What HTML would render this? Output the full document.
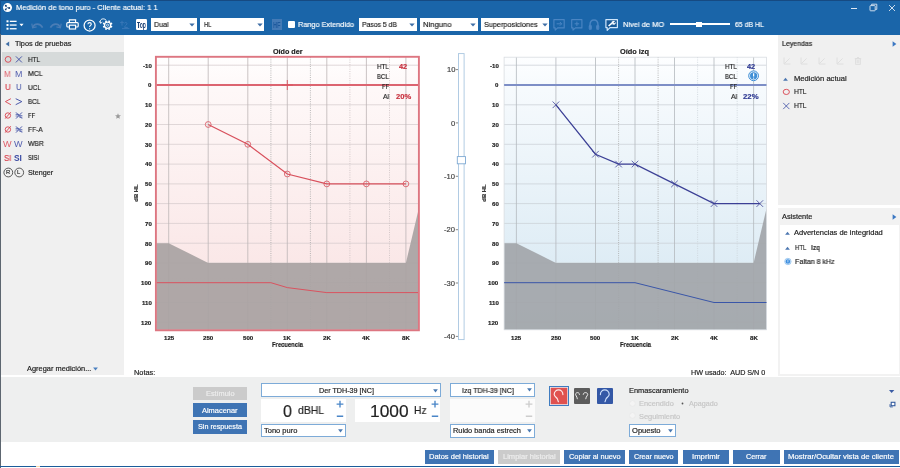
<!DOCTYPE html>
<html>
<head>
<meta charset="utf-8">
<title>Medición de tono puro</title>
<style>
html,body{margin:0;padding:0;}
body{width:900px;height:468px;overflow:hidden;background:#fff;font-family:"Liberation Sans",sans-serif;font-size:7.5px;color:#222;position:relative;}
.abs{position:absolute;}
.t{position:absolute;white-space:nowrap;line-height:10px;height:10px;will-change:transform;-webkit-text-stroke:0.18px;}
svg{display:block;overflow:visible;}
</style>
</head>
<body>
<div class="abs" style="left:0.00px;top:0.00px;width:900.00px;height:34.60px;background:#1a65a9;"></div>
<div class="abs" style="left:0.00px;top:0.00px;width:900.00px;height:1.00px;background:#164a82;"></div>
<div class="abs" style="left:0.00px;top:0.00px;width:1.00px;height:34.60px;background:#17528e;"></div>
<div class="abs" style="left:1.00px;top:34.60px;width:122.60px;height:340.40px;background:#f0f0f0;"></div>
<div class="abs" style="left:1.50px;top:52.20px;width:122.10px;height:14.00px;background:#d6dada;"></div>
<div class="abs" style="left:778.30px;top:34.60px;width:121.70px;height:170.60px;background:#f0f0f0;"></div>
<div class="abs" style="left:778.30px;top:207.70px;width:121.70px;height:168.30px;background:#f2f2f2;"></div>
<div class="abs" style="left:780.00px;top:224.80px;width:119.00px;height:148.80px;background:#ffffff;"></div>
<div class="abs" style="left:1.00px;top:377.00px;width:899.00px;height:65.00px;background:#eeefef;"></div>
<svg class="abs" style="left:0;top:0" width="16" height="16" viewBox="0 0 16 16"><circle cx="7.55" cy="7.6" r="4.5" fill="#fff"/><path d="M5.8 5.7L7.4 7.7L9.2 8M7.4 7.7L5.7 9.4" stroke="#1b4f8a" stroke-width="0.6" fill="none"/><circle cx="5.8" cy="5.7" r="1" fill="#173f73"/><circle cx="9.2" cy="8" r="1.05" fill="#173f73"/><circle cx="5.7" cy="9.4" r="0.9" fill="#173f73"/></svg>
<div class="t" style="left:16.30px;top:2.60px;font-size:7.80px;color:#fff;transform:scaleX(0.967);transform-origin:0 50%;">Medición de tono puro - Cliente actual: 1 1</div>
<div class="abs" style="left:850.50px;top:7.60px;width:6.50px;height:1.00px;background:#dfe8f3;"></div>
<svg class="abs" style="left:868px;top:2px" width="11" height="11" viewBox="0 0 11 11" fill="none" stroke="#dfe8f3" stroke-width="0.9"><rect x="2" y="3.6" width="5.2" height="5.2" rx="0.6"/><path d="M3.6 3.4V2.2H8.8V7.4H7.4"/></svg>
<svg class="abs" style="left:888px;top:4px" width="8" height="8" viewBox="0 0 8 8" stroke="#dfe8f3" stroke-width="0.9"><path d="M1 1L7 7M7 1L1 7"/></svg>
<svg class="abs" style="left:5.5px;top:20px" width="18" height="11" viewBox="0 0 18 11"><g fill="#fff"><rect x="0.5" y="0.3" width="2" height="2"/><rect x="0.5" y="4" width="2" height="2"/><rect x="0.5" y="7.7" width="2" height="2"/><rect x="3.8" y="0.7" width="6.8" height="1.3"/><rect x="3.8" y="4.4" width="6.8" height="1.3"/><rect x="3.8" y="8.1" width="6.8" height="1.3"/><path d="M13.4 3.7H17.6L15.5 6.2Z"/></g></svg>
<svg class="abs" style="left:30.5px;top:21px" width="13" height="9" viewBox="0 0 13 9" fill="none" stroke="#4a7db6" stroke-width="1.7"><path d="M2 6C3.5 2.2 9 1.8 11.6 6.6"/><path d="M0.8 2.6L1.6 6.8L5.6 5.8" stroke-width="1.2"/></svg>
<svg class="abs" style="left:48.5px;top:21px" width="13" height="9" viewBox="0 0 13 9" fill="none" stroke="#4a7db6" stroke-width="1.7"><path d="M11 6C9.5 2.2 4 1.8 1.4 6.6"/><path d="M12.2 2.6L11.4 6.8L7.4 5.8" stroke-width="1.2"/></svg>
<svg class="abs" style="left:66px;top:19.2px" width="13" height="11" viewBox="0 0 13 11" fill="none" stroke="#fff" stroke-width="1.15"><path d="M3.4 3.6V0.9H9.6V3.6"/><rect x="0.8" y="3.6" width="11.4" height="4.4" rx="1"/><rect x="3.4" y="6.2" width="6.2" height="3.8" fill="#1a65a9"/></svg>
<svg class="abs" style="left:83px;top:18.5px" width="13" height="13" viewBox="0 0 13 13" fill="none" stroke="#fff" stroke-width="1"><circle cx="6.6" cy="6.5" r="5.5" stroke-width="1.25"/><path d="M4.9 5.2C4.9 3.1 8.3 3.1 8.3 5.2C8.3 6.5 6.6 6.4 6.6 8" stroke-width="1.1"/><circle cx="6.6" cy="9.8" r="0.65" fill="#fff" stroke="none"/></svg>
<svg class="abs" style="left:0;top:0" width="900" height="40" viewBox="0 0 900 40" fill="none" stroke="#fff"><circle cx="107.6" cy="25.2" r="3.1" stroke-width="1.3"/><path d="M110.74 26.50L112.13 27.08M108.90 28.34L109.48 29.73M106.30 28.34L105.72 29.73M104.46 26.50L103.07 27.08M104.46 23.90L103.07 23.32M106.30 22.06L105.72 20.67M108.90 22.06L109.48 20.67M110.74 23.90L112.13 23.32" stroke-width="1.7"/><circle cx="107.6" cy="25.2" r="1.1" stroke-width="0.7"/><path d="M100.4 22.8C99.4 19.6 102.8 17.6 105.8 19.8" stroke-width="1"/><path d="M99.5 21L100.5 23.4L102.4 22" stroke-width="0.8"/></svg>
<svg class="abs" style="left:119px;top:19.5px" width="11" height="11" viewBox="0 0 11 11" fill="none" stroke="#3a78b8" stroke-width="1"><path d="M3 0.8V5.6M1.2 2.6H4.8M5.4 3.2C6.4 1.8 8.6 2.6 7.8 4.2C7.2 5.4 5.6 6 5.6 7.4H8.8M3 8.6H10.4"/></svg>
<div class="abs" style="left:136.00px;top:19.30px;width:11.00px;height:10.90px;background:#fff;border-radius:1.2px;"></div>
<div class="t" style="left:137.20px;top:20.42px;font-size:8.30px;color:#173d72;font-weight:bold;transform:scaleX(0.603);transform-origin:0 50%;-webkit-text-stroke:0;">Top</div>
<div class="abs" style="left:150.70px;top:18.00px;width:46.10px;height:13.20px;background:#fff;"></div>
<div class="t" style="left:153.70px;top:19.60px;font-size:7.80px;color:#1c1c1c;transform:scaleX(0.910);transform-origin:0 50%;">Dual</div>
<svg class="abs" style="left:189.2px;top:23px" width="6" height="4" viewBox="0 0 6 4"><path d="M0.3 0.4H5.7L3 3.6Z" fill="#3f6ea6"/></svg>
<div class="abs" style="left:200.30px;top:18.00px;width:64.20px;height:13.20px;background:#fff;"></div>
<div class="t" style="left:204.00px;top:19.60px;font-size:7.80px;color:#1c1c1c;transform:scaleX(0.732);transform-origin:0 50%;">HL</div>
<svg class="abs" style="left:256.9px;top:23px" width="6" height="4" viewBox="0 0 6 4"><path d="M0.3 0.4H5.7L3 3.6Z" fill="#3f6ea6"/></svg>
<div class="abs" style="left:272.00px;top:19.20px;width:9.60px;height:10.60px;background:#447ab6;"></div>
<div class="t" style="left:273.00px;top:20.32px;font-size:8.60px;color:#1d599c;font-weight:bold;transform:scaleX(0.654);transform-origin:0 50%;-webkit-text-stroke:0;">HF</div>
<div class="abs" style="left:288.00px;top:21.30px;width:7.00px;height:7.00px;background:#fff;border-radius:1px;"></div>
<div class="t" style="left:298.00px;top:19.60px;font-size:7.80px;color:#fff;transform:scaleX(0.936);transform-origin:0 50%;">Rango Extendido</div>
<div class="abs" style="left:359.30px;top:18.00px;width:57.50px;height:13.20px;background:#fff;"></div>
<div class="t" style="left:362.00px;top:19.60px;font-size:7.80px;color:#1c1c1c;transform:scaleX(0.877);transform-origin:0 50%;">Pasos 5 dB</div>
<svg class="abs" style="left:409.2px;top:23px" width="6" height="4" viewBox="0 0 6 4"><path d="M0.3 0.4H5.7L3 3.6Z" fill="#3f6ea6"/></svg>
<div class="abs" style="left:420.30px;top:18.00px;width:57.70px;height:13.20px;background:#fff;"></div>
<div class="t" style="left:423.00px;top:19.60px;font-size:7.80px;color:#1c1c1c;transform:scaleX(0.981);transform-origin:0 50%;">Ninguno</div>
<svg class="abs" style="left:470.4px;top:23px" width="6" height="4" viewBox="0 0 6 4"><path d="M0.3 0.4H5.7L3 3.6Z" fill="#3f6ea6"/></svg>
<div class="abs" style="left:481.30px;top:18.00px;width:68.20px;height:13.20px;background:#fff;"></div>
<div class="t" style="left:484.30px;top:19.60px;font-size:7.80px;color:#1c1c1c;transform:scaleX(0.931);transform-origin:0 50%;">Superposiciones</div>
<svg class="abs" style="left:541.9px;top:23px" width="6" height="4" viewBox="0 0 6 4"><path d="M0.3 0.4H5.7L3 3.6Z" fill="#3f6ea6"/></svg>
<svg class="abs" style="left:0;top:0" width="900" height="40" viewBox="0 0 900 40" fill="none" stroke="#4a85c3" stroke-width="1.15" stroke-linejoin="round"><path d="M553.9 19.6H564.2V27.9H557.6L555.2 30.1V27.9H553.9Z"/><path d="M556.6 23.8H561.6M559.8 21.9L561.7 23.8L559.8 25.7" stroke-width="1"/><path d="M571.7 19.6H581.9V27.9H575.4L573 30.1V27.9H571.7Z"/><path d="M576.9 21.6V26M574.6 23.8H579.2" stroke-width="1"/><path d="M590 27V25C590 18.4 598 18.4 598 25V27" stroke-width="1.4"/><rect x="589.2" y="25.2" width="2.2" height="4.4" rx="0.9" stroke-width="0.9" fill="#4a85c3"/><rect x="596.6" y="25.2" width="2.2" height="4.4" rx="0.9" stroke-width="0.9" fill="#4a85c3"/><path d="M605.9 19.6H617.4V27.6H610L607.2 30.4V27.6H605.9Z" stroke="#cfe6fb" stroke-width="1.2" fill="#185997"/><path d="M608.6 26L612 23.2" stroke="#fff" stroke-width="1.6"/><path d="M611.6 22C612.4 21 613.8 20.8 614.8 21.4L613.4 22.6L614.2 23.5L615.6 22.4C615.9 23.8 614.4 25.1 612.7 24.4Z" fill="#fff" stroke="#fff" stroke-width="0.3"/></svg>
<div class="t" style="left:623.00px;top:19.60px;font-size:7.80px;color:#fff;transform:scaleX(0.962);transform-origin:0 50%;">Nivel de MO</div>
<div class="abs" style="left:669.50px;top:23.40px;width:60.00px;height:2.10px;background:#fff;"></div>
<div class="abs" style="left:696.30px;top:22.40px;width:6.20px;height:4.60px;background:#fff;"></div>
<div class="t" style="left:735.00px;top:19.60px;font-size:7.80px;color:#fff;transform:scaleX(0.886);transform-origin:0 50%;">65 dB HL</div>
<svg class="abs" style="left:5px;top:40.5px" width="5" height="6" viewBox="0 0 5 6"><path d="M4.2 0.4V5.6L0.6 3Z" fill="#3f6ea6"/></svg>
<div class="t" style="left:15.00px;top:38.81px;font-size:7.20px;color:#222;transform:scaleX(1.020);transform-origin:0 50%;">Tipos de pruebas</div>
<svg class="abs" style="left:3.5px;top:55.2px" width="20" height="9" viewBox="0 0 20 9" fill="none" stroke-width="0.9"><circle cx="4.1" cy="4.4" r="2.9" stroke="#d8434f"/><path d="M11.9 1.4L17.9 7.4M17.9 1.4L11.9 7.4" stroke="#3b4ba3"/></svg>
<div class="t" style="left:27.80px;top:54.81px;font-size:7.20px;color:#222;transform:scaleX(0.882);transform-origin:0 50%;">HTL</div>
<div class="t" style="left:4.20px;top:69.22px;font-size:8.90px;color:#df5e69;transform:scaleX(0.904);transform-origin:0 50%;-webkit-text-stroke:0;">M</div>
<div class="t" style="left:14.70px;top:69.22px;font-size:8.90px;color:#5561b0;transform:scaleX(0.958);transform-origin:0 50%;-webkit-text-stroke:0;">M</div>
<div class="t" style="left:27.80px;top:68.81px;font-size:7.20px;color:#1c1c1c;transform:scaleX(0.960);transform-origin:0 50%;">MCL</div>
<div class="t" style="left:4.50px;top:82.18px;font-size:9.00px;color:#d8434f;transform:scaleX(0.892);transform-origin:0 50%;">U</div>
<div class="t" style="left:15.50px;top:82.18px;font-size:9.00px;color:#3b4ba3;transform:scaleX(0.862);transform-origin:0 50%;-webkit-text-stroke:0;">U</div>
<div class="t" style="left:27.80px;top:82.81px;font-size:7.20px;color:#1c1c1c;transform:scaleX(0.889);transform-origin:0 50%;">UCL</div>
<svg class="abs" style="left:3.5px;top:96.8px" width="20" height="9" viewBox="0 0 20 9" fill="none" stroke-width="0.9"><path d="M6.9 1.7L1.4 4.6L6.9 7.7" stroke="#d8434f"/><path d="M11.7 1.7L17.8 4.6L11.7 7.7" stroke="#3b4ba3"/></svg>
<div class="t" style="left:27.80px;top:96.81px;font-size:7.20px;color:#1c1c1c;transform:scaleX(0.871);transform-origin:0 50%;">BCL</div>
<svg class="abs" style="left:3.5px;top:111.1px" width="20" height="9" viewBox="0 0 20 9" fill="none" stroke-width="0.9"><circle cx="3.9" cy="4.5" r="2.7" stroke="#d8434f"/><path d="M1.2 7.6L6.8 1.2" stroke="#d8434f"/><path d="M12 1.4L18 7.6M18 1.4L12 7.6" stroke="#3b4ba3"/><path d="M11.6 3.4H15M11.6 5H14.4M15.6 4.6H18.4M15.2 6.2H18.4" stroke="#3b4ba3" stroke-width="0.7"/></svg>
<div class="t" style="left:27.90px;top:110.81px;font-size:7.20px;color:#1c1c1c;transform:scaleX(0.796);transform-origin:0 50%;">FF</div>
<svg class="abs" style="left:3.5px;top:125.0px" width="20" height="9" viewBox="0 0 20 9" fill="none" stroke-width="0.9"><circle cx="3.9" cy="4.5" r="2.7" stroke="#d8434f"/><path d="M1.2 7.6L6.8 1.2" stroke="#d8434f"/><path d="M12 1.4L18 7.6M18 1.4L12 7.6" stroke="#3b4ba3"/><path d="M11.6 3.4H15M11.6 5H14.4M15.6 4.6H18.4M15.2 6.2H18.4" stroke="#3b4ba3" stroke-width="0.7"/></svg>
<div class="t" style="left:27.90px;top:124.81px;font-size:7.20px;color:#1c1c1c;transform:scaleX(0.913);transform-origin:0 50%;">FF-A</div>
<svg class="abs" style="left:114.5px;top:112.6px" width="6" height="6" viewBox="0 0 10 10"><path d="M5 0.3L6.4 3.6L9.9 3.9L7.2 6.2L8.1 9.7L5 7.8L1.9 9.7L2.8 6.2L0.1 3.9L3.6 3.6Z" fill="#9a9a9a"/></svg>
<div class="t" style="left:3.20px;top:139.25px;font-size:8.80px;color:#df5e69;transform:scaleX(1.035);transform-origin:0 50%;-webkit-text-stroke:0;">W</div>
<div class="t" style="left:14.00px;top:139.25px;font-size:8.80px;color:#5561b0;transform:scaleX(1.035);transform-origin:0 50%;-webkit-text-stroke:0;">W</div>
<div class="t" style="left:27.90px;top:138.81px;font-size:7.20px;color:#1c1c1c;transform:scaleX(0.947);transform-origin:0 50%;">WBR</div>
<div class="t" style="left:3.60px;top:153.39px;font-size:8.40px;color:#d8434f;transform:scaleX(0.932);transform-origin:0 50%;">SI</div>
<div class="t" style="left:14.40px;top:153.39px;font-size:8.40px;color:#3b4ba3;font-weight:bold;transform:scaleX(0.958);transform-origin:0 50%;-webkit-text-stroke:0;">SI</div>
<div class="t" style="left:27.90px;top:152.81px;font-size:7.20px;color:#1c1c1c;transform:scaleX(0.816);transform-origin:0 50%;">SISI</div>
<svg class="abs" style="left:2.5px;top:166.6px" width="23" height="11" viewBox="0 0 23 11" fill="none" stroke="#333" stroke-width="0.8"><circle cx="5.3" cy="5.5" r="4.4"/><circle cx="16.2" cy="5.5" r="4.4"/></svg>
<div class="t" style="left:5.71px;top:167.29px;font-size:5.80px;color:#333;">R</div>
<div class="t" style="left:17.29px;top:167.29px;font-size:5.80px;color:#333;">L</div>
<div class="t" style="left:27.90px;top:167.81px;font-size:7.20px;color:#1c1c1c;">Stenger</div>
<div class="t" style="left:26.60px;top:363.81px;font-size:7.20px;color:#1c1c1c;transform:scaleX(1.032);transform-origin:0 50%;">Agregar medición...</div>
<svg class="abs" style="left:93.4px;top:366.5px" width="5" height="4" viewBox="0 0 5 4"><path d="M0.1 0.4H4.9L2.5 3.4Z" fill="#4a7fbf"/></svg>
<svg class="abs" style="left:0;top:0" width="900" height="468" viewBox="0 0 900 468"><defs><linearGradient id="gr" x1="0" y1="0" x2="0" y2="1"><stop offset="0" stop-color="#fffefe"/><stop offset="0.12" stop-color="#fef8f8"/><stop offset="1" stop-color="#f9e1e1"/></linearGradient><linearGradient id="gb" x1="0" y1="0" x2="0" y2="1"><stop offset="0" stop-color="#fdfeff"/><stop offset="0.12" stop-color="#f6fafd"/><stop offset="1" stop-color="#d5e7f2"/></linearGradient></defs><rect x="156.4" y="57.2" width="262.4" height="272.6" fill="url(#gr)"/><path d="M156.4 65.2H418.8" stroke="#d6cccd" stroke-width="0.75"/><path d="M156.4 104.8H418.8" stroke="#d6cccd" stroke-width="0.75"/><path d="M156.4 124.5H418.8" stroke="#d6cccd" stroke-width="0.75"/><path d="M156.4 144.3H418.8" stroke="#d6cccd" stroke-width="0.75"/><path d="M156.4 164.1H418.8" stroke="#d6cccd" stroke-width="0.75"/><path d="M156.4 183.9H418.8" stroke="#d6cccd" stroke-width="0.75"/><path d="M156.4 203.6H418.8" stroke="#d6cccd" stroke-width="0.75"/><path d="M156.4 223.4H418.8" stroke="#d6cccd" stroke-width="0.75"/><path d="M156.4 243.2H418.8" stroke="#d6cccd" stroke-width="0.75"/><path d="M156.4 262.9H418.8" stroke="#d6cccd" stroke-width="0.75"/><path d="M156.4 282.7H418.8" stroke="#d6cccd" stroke-width="0.75"/><path d="M156.4 302.5H418.8" stroke="#d6cccd" stroke-width="0.75"/><path d="M156.4 322.2H418.8" stroke="#d6cccd" stroke-width="0.75"/><path d="M168.7 57.2V329.8" stroke="#bdb5b6" stroke-width="0.8"/><path d="M208.2 57.2V329.8" stroke="#bdb5b6" stroke-width="0.8"/><path d="M247.8 57.2V329.8" stroke="#bdb5b6" stroke-width="0.8"/><path d="M287.3 57.2V329.8" stroke="#bdb5b6" stroke-width="0.8"/><path d="M326.8 57.2V329.8" stroke="#bdb5b6" stroke-width="0.8"/><path d="M366.4 57.2V329.8" stroke="#bdb5b6" stroke-width="0.8"/><path d="M405.9 57.2V329.8" stroke="#bdb5b6" stroke-width="0.8"/><path d="M349.9 57.2V329.8" stroke="#c9bfc0" stroke-width="0.8" stroke-dasharray="1 1.3"/><path d="M389.5 57.2V329.8" stroke="#c9bfc0" stroke-width="0.8" stroke-dasharray="1 1.3"/><path d="M270.9 57.2V329.8" stroke="#a8a8a8" stroke-width="0.8" stroke-dasharray="1 1.2"/><path d="M310.4 57.2V329.8" stroke="#a8a8a8" stroke-width="0.8" stroke-dasharray="1 1.2"/><path d="M156.4 243.2L168.7 243.2L208.2 262.9L405.9 262.9L418.8 208.6V329.8H156.4Z" fill="#a9a3a3" fill-opacity="0.93"/><rect x="504.1" y="57.2" width="262.4" height="272.6" fill="url(#gb)"/><path d="M504.1 65.2H766.5" stroke="#cbd0d5" stroke-width="0.75"/><path d="M504.1 104.8H766.5" stroke="#cbd0d5" stroke-width="0.75"/><path d="M504.1 124.5H766.5" stroke="#cbd0d5" stroke-width="0.75"/><path d="M504.1 144.3H766.5" stroke="#cbd0d5" stroke-width="0.75"/><path d="M504.1 164.1H766.5" stroke="#cbd0d5" stroke-width="0.75"/><path d="M504.1 183.9H766.5" stroke="#cbd0d5" stroke-width="0.75"/><path d="M504.1 203.6H766.5" stroke="#cbd0d5" stroke-width="0.75"/><path d="M504.1 223.4H766.5" stroke="#cbd0d5" stroke-width="0.75"/><path d="M504.1 243.2H766.5" stroke="#cbd0d5" stroke-width="0.75"/><path d="M504.1 262.9H766.5" stroke="#cbd0d5" stroke-width="0.75"/><path d="M504.1 282.7H766.5" stroke="#cbd0d5" stroke-width="0.75"/><path d="M504.1 302.5H766.5" stroke="#cbd0d5" stroke-width="0.75"/><path d="M504.1 322.2H766.5" stroke="#cbd0d5" stroke-width="0.75"/><path d="M516.4 57.2V329.8" stroke="#b4b9be" stroke-width="0.8"/><path d="M555.9 57.2V329.8" stroke="#b4b9be" stroke-width="0.8"/><path d="M595.5 57.2V329.8" stroke="#b4b9be" stroke-width="0.8"/><path d="M635.0 57.2V329.8" stroke="#b4b9be" stroke-width="0.8"/><path d="M674.5 57.2V329.8" stroke="#b4b9be" stroke-width="0.8"/><path d="M714.0 57.2V329.8" stroke="#b4b9be" stroke-width="0.8"/><path d="M753.6 57.2V329.8" stroke="#b4b9be" stroke-width="0.8"/><path d="M697.6 57.2V329.8" stroke="#ccd3d9" stroke-width="0.8" stroke-dasharray="1 1.3"/><path d="M737.2 57.2V329.8" stroke="#ccd3d9" stroke-width="0.8" stroke-dasharray="1 1.3"/><path d="M618.6 57.2V329.8" stroke="#a8a8a8" stroke-width="0.8" stroke-dasharray="1 1.2"/><path d="M658.1 57.2V329.8" stroke="#a8a8a8" stroke-width="0.8" stroke-dasharray="1 1.2"/><path d="M504.1 243.2L516.4 243.2L555.9 262.9L753.6 262.9L766.5 208.6V329.8H504.1Z" fill="#a2a6aa" fill-opacity="0.93"/><path d="M156.4 85.0H418.8" stroke="#dc6470" stroke-width="1.9"/><path d="M287.3 80.0V90.0M281.7 85.0H292.9" stroke="#d8505c" stroke-width="0.9"/><path d="M156.4 282.7L270.9 282.7L287.3 287.6L326.8 292.6H418.8" stroke="#d9535f" stroke-width="1" fill="none"/><path d="M208.2 124.5L247.8 144.3L287.3 174.0L326.8 183.9L366.4 183.9L405.9 183.9" stroke="#d8505c" stroke-width="1.25" fill="none"/><circle cx="208.2" cy="124.5" r="2.9" fill="none" stroke="#d8505c" stroke-width="0.8"/><circle cx="247.8" cy="144.3" r="2.9" fill="none" stroke="#d8505c" stroke-width="0.8"/><circle cx="287.3" cy="174.0" r="2.9" fill="none" stroke="#d8505c" stroke-width="0.8"/><circle cx="326.8" cy="183.9" r="2.9" fill="none" stroke="#d8505c" stroke-width="0.8"/><circle cx="366.4" cy="183.9" r="2.9" fill="none" stroke="#d8505c" stroke-width="0.8"/><circle cx="405.9" cy="183.9" r="2.9" fill="none" stroke="#d8505c" stroke-width="0.8"/><rect x="155.9" y="56.8" width="263" height="273.5" fill="none" stroke="#dd7681" stroke-width="1.9"/><rect x="504.1" y="57.2" width="262.4" height="272.6" fill="none" stroke="#d9dde2" stroke-width="0.8"/><path d="M504.1 85.0H766.5" stroke="#7d8ec6" stroke-width="1.9"/><path d="M504.1 282.7L635.0 282.7L714.0 302.5H766.5" stroke="#3a56a8" stroke-width="1" fill="none"/><path d="M555.9 104.8L595.5 154.2L618.6 164.1L635.0 164.1L674.5 183.9L714.0 203.6L759.8 203.6" stroke="#3c4096" stroke-width="1.25" fill="none"/><path d="M552.6 101.5L559.2 108.1M559.2 101.5L552.6 108.1" stroke="#3c4096" stroke-width="0.8"/><path d="M592.2 150.9L598.8 157.5M598.8 150.9L592.2 157.5" stroke="#3c4096" stroke-width="0.8"/><path d="M615.3 160.8L621.9 167.4M621.9 160.8L615.3 167.4" stroke="#3c4096" stroke-width="0.8"/><path d="M631.7 160.8L638.3 167.4M638.3 160.8L631.7 167.4" stroke="#3c4096" stroke-width="0.8"/><path d="M671.2 180.6L677.8 187.2M677.8 180.6L671.2 187.2" stroke="#3c4096" stroke-width="0.8"/><path d="M710.8 200.3L717.3 206.9M717.3 200.3L710.8 206.9" stroke="#3c4096" stroke-width="0.8"/><path d="M756.5 200.3L763.1 206.9M763.1 200.3L756.5 206.9" stroke="#3c4096" stroke-width="0.8"/><circle cx="753.6" cy="75.8" r="4.9" fill="#eaf3fb" stroke="#3f8fd6" stroke-width="1"/><circle cx="753.6" cy="75.8" r="3.6" fill="#3f8fd6"/><path d="M753.6 73.3V76.5" stroke="#fff" stroke-width="1.25"/><circle cx="753.6" cy="78.1" r="0.7" fill="#fff"/><rect x="458.5" y="53.6" width="5.6" height="286" fill="#fff" stroke="#a9c6e0" stroke-width="0.9"/><rect x="457.3" y="156.6" width="8.2" height="7.2" fill="#fff" stroke="#7ea9d3" stroke-width="0.9"/><path d="M455.8 69.6H458" stroke="#555" stroke-width="0.7"/><path d="M455.8 122.9H458" stroke="#555" stroke-width="0.7"/><path d="M455.8 176.3H458" stroke="#555" stroke-width="0.7"/><path d="M455.8 229.7H458" stroke="#555" stroke-width="0.7"/><path d="M455.8 283.0H458" stroke="#555" stroke-width="0.7"/><path d="M455.8 336.4H458" stroke="#555" stroke-width="0.7"/></svg>
<div class="t" style="left:446.85px;top:64.67px;font-size:7.60px;color:#444;">10</div>
<div class="t" style="left:451.07px;top:118.67px;font-size:7.60px;color:#444;">0</div>
<div class="t" style="left:444.32px;top:171.67px;font-size:7.60px;color:#444;">-10</div>
<div class="t" style="left:444.32px;top:224.67px;font-size:7.60px;color:#444;">-20</div>
<div class="t" style="left:444.32px;top:278.67px;font-size:7.60px;color:#444;">-30</div>
<div class="t" style="left:444.32px;top:331.67px;font-size:7.60px;color:#444;">-40</div>
<div class="t" style="left:142.78px;top:61.19px;font-size:6.10px;color:#222;font-weight:bold;">-10</div>
<div class="t" style="left:148.21px;top:80.19px;font-size:6.10px;color:#222;font-weight:bold;">0</div>
<div class="t" style="left:144.81px;top:100.19px;font-size:6.10px;color:#222;font-weight:bold;">10</div>
<div class="t" style="left:144.81px;top:120.19px;font-size:6.10px;color:#222;font-weight:bold;">20</div>
<div class="t" style="left:144.81px;top:140.19px;font-size:6.10px;color:#222;font-weight:bold;">30</div>
<div class="t" style="left:144.81px;top:159.19px;font-size:6.10px;color:#222;font-weight:bold;">40</div>
<div class="t" style="left:144.81px;top:179.19px;font-size:6.10px;color:#222;font-weight:bold;">50</div>
<div class="t" style="left:144.81px;top:199.19px;font-size:6.10px;color:#222;font-weight:bold;">60</div>
<div class="t" style="left:144.81px;top:219.19px;font-size:6.10px;color:#222;font-weight:bold;">70</div>
<div class="t" style="left:144.81px;top:239.19px;font-size:6.10px;color:#222;font-weight:bold;">80</div>
<div class="t" style="left:144.81px;top:258.19px;font-size:6.10px;color:#222;font-weight:bold;">90</div>
<div class="t" style="left:141.42px;top:278.19px;font-size:6.10px;color:#222;font-weight:bold;">100</div>
<div class="t" style="left:141.76px;top:298.19px;font-size:6.10px;color:#222;font-weight:bold;">110</div>
<div class="t" style="left:141.42px;top:318.19px;font-size:6.10px;color:#222;font-weight:bold;">120</div>
<div class="t" style="left:163.61px;top:333.19px;font-size:6.10px;color:#222;font-weight:bold;">125</div>
<div class="t" style="left:203.14px;top:333.19px;font-size:6.10px;color:#222;font-weight:bold;">250</div>
<div class="t" style="left:242.67px;top:333.19px;font-size:6.10px;color:#222;font-weight:bold;">500</div>
<div class="t" style="left:283.39px;top:333.19px;font-size:6.10px;color:#222;font-weight:bold;">1K</div>
<div class="t" style="left:322.92px;top:333.19px;font-size:6.10px;color:#222;font-weight:bold;">2K</div>
<div class="t" style="left:362.45px;top:333.19px;font-size:6.10px;color:#222;font-weight:bold;">4K</div>
<div class="t" style="left:401.98px;top:333.19px;font-size:6.10px;color:#222;font-weight:bold;">8K</div>
<div class="t" style="left:271.80px;top:339.91px;font-size:6.90px;color:#222;font-weight:bold;transform:scaleX(0.851);transform-origin:0 50%;">Frecuencia</div>
<div class="t" style="left:115.8px;top:188.3px;width:40px;text-align:center;font-size:5.9px;font-weight:bold;color:#222;transform:rotate(-90deg);">dB HL</div>
<div class="t" style="left:489.58px;top:61.19px;font-size:6.10px;color:#222;font-weight:bold;">-10</div>
<div class="t" style="left:495.01px;top:80.19px;font-size:6.10px;color:#222;font-weight:bold;">0</div>
<div class="t" style="left:491.61px;top:100.19px;font-size:6.10px;color:#222;font-weight:bold;">10</div>
<div class="t" style="left:491.61px;top:120.19px;font-size:6.10px;color:#222;font-weight:bold;">20</div>
<div class="t" style="left:491.61px;top:140.19px;font-size:6.10px;color:#222;font-weight:bold;">30</div>
<div class="t" style="left:491.61px;top:159.19px;font-size:6.10px;color:#222;font-weight:bold;">40</div>
<div class="t" style="left:491.61px;top:179.19px;font-size:6.10px;color:#222;font-weight:bold;">50</div>
<div class="t" style="left:491.61px;top:199.19px;font-size:6.10px;color:#222;font-weight:bold;">60</div>
<div class="t" style="left:491.61px;top:219.19px;font-size:6.10px;color:#222;font-weight:bold;">70</div>
<div class="t" style="left:491.61px;top:239.19px;font-size:6.10px;color:#222;font-weight:bold;">80</div>
<div class="t" style="left:491.61px;top:258.19px;font-size:6.10px;color:#222;font-weight:bold;">90</div>
<div class="t" style="left:488.22px;top:278.19px;font-size:6.10px;color:#222;font-weight:bold;">100</div>
<div class="t" style="left:488.56px;top:298.19px;font-size:6.10px;color:#222;font-weight:bold;">110</div>
<div class="t" style="left:488.22px;top:318.19px;font-size:6.10px;color:#222;font-weight:bold;">120</div>
<div class="t" style="left:511.31px;top:333.19px;font-size:6.10px;color:#222;font-weight:bold;">125</div>
<div class="t" style="left:550.84px;top:333.19px;font-size:6.10px;color:#222;font-weight:bold;">250</div>
<div class="t" style="left:590.37px;top:333.19px;font-size:6.10px;color:#222;font-weight:bold;">500</div>
<div class="t" style="left:631.09px;top:333.19px;font-size:6.10px;color:#222;font-weight:bold;">1K</div>
<div class="t" style="left:670.62px;top:333.19px;font-size:6.10px;color:#222;font-weight:bold;">2K</div>
<div class="t" style="left:710.15px;top:333.19px;font-size:6.10px;color:#222;font-weight:bold;">4K</div>
<div class="t" style="left:749.68px;top:333.19px;font-size:6.10px;color:#222;font-weight:bold;">8K</div>
<div class="t" style="left:619.50px;top:339.91px;font-size:6.90px;color:#222;font-weight:bold;transform:scaleX(0.851);transform-origin:0 50%;">Frecuencia</div>
<div class="t" style="left:463.5px;top:188.3px;width:40px;text-align:center;font-size:5.9px;font-weight:bold;color:#222;transform:rotate(-90deg);">dB HL</div>
<div class="t" style="left:272.90px;top:46.81px;font-size:7.20px;color:#222;font-weight:bold;">Oído der</div>
<div class="t" style="left:620.10px;top:46.81px;font-size:7.20px;color:#222;font-weight:bold;transform:scaleX(1.025);transform-origin:0 50%;">Oído izq</div>
<div class="t" style="left:377.40px;top:61.77px;font-size:7.30px;color:#222;transform:scaleX(0.856);transform-origin:0 50%;">HTL</div>
<div class="t" style="left:377.40px;top:71.77px;font-size:7.30px;color:#222;transform:scaleX(0.831);transform-origin:0 50%;">BCL</div>
<div class="t" style="left:382.20px;top:81.77px;font-size:7.30px;color:#222;transform:scaleX(0.785);transform-origin:0 50%;">FF</div>
<div class="t" style="left:382.80px;top:91.77px;font-size:7.30px;color:#222;transform:scaleX(0.928);transform-origin:0 50%;">AI</div>
<div class="t" style="left:399.08px;top:61.74px;font-size:7.40px;color:#c8303e;font-weight:bold;">42</div>
<div class="t" style="left:395.60px;top:91.74px;font-size:7.40px;color:#c8303e;font-weight:bold;transform:scaleX(1.026);transform-origin:0 50%;">20%</div>
<div class="t" style="left:725.10px;top:61.77px;font-size:7.30px;color:#222;transform:scaleX(0.856);transform-origin:0 50%;">HTL</div>
<div class="t" style="left:725.10px;top:71.77px;font-size:7.30px;color:#222;transform:scaleX(0.831);transform-origin:0 50%;">BCL</div>
<div class="t" style="left:729.90px;top:81.77px;font-size:7.30px;color:#222;transform:scaleX(0.785);transform-origin:0 50%;">FF</div>
<div class="t" style="left:730.50px;top:91.77px;font-size:7.30px;color:#222;transform:scaleX(0.928);transform-origin:0 50%;">AI</div>
<div class="t" style="left:746.78px;top:61.74px;font-size:7.40px;color:#2f3a93;font-weight:bold;">42</div>
<div class="t" style="left:743.40px;top:91.74px;font-size:7.40px;color:#2f3a93;font-weight:bold;transform:scaleX(1.053);transform-origin:0 50%;">22%</div>
<div class="t" style="left:133.60px;top:367.81px;font-size:7.20px;color:#222;transform:scaleX(1.028);transform-origin:0 50%;">Notas:</div>
<div class="t" style="left:691.00px;top:367.81px;font-size:7.20px;color:#222;white-space:pre;">HW usado:  AUD S/N 0</div>
<div class="t" style="left:781.60px;top:38.81px;font-size:7.20px;color:#1c1c1c;transform:scaleX(0.974);transform-origin:0 50%;">Leyendas</div>
<svg class="abs" style="left:891.6px;top:40.6px" width="5" height="6" viewBox="0 0 5 6"><path d="M0.6 0.3V5.7L4.4 3Z" fill="#3c78c3"/></svg>
<svg class="abs" style="left:782.6px;top:57px" width="8" height="8" viewBox="0 0 8 8" fill="none" stroke="#dcdcdc" stroke-width="0.9"><path d="M1 0.6V7H7.4M1.6 6.4L6.6 1.4"/></svg>
<svg class="abs" style="left:800.2px;top:57px" width="8" height="8" viewBox="0 0 8 8" fill="none" stroke="#dcdcdc" stroke-width="0.9"><path d="M1 0.6V7H7.4M1.6 6.4L6.6 1.4"/></svg>
<svg class="abs" style="left:818.2px;top:57px" width="8" height="8" viewBox="0 0 8 8" fill="none" stroke="#dcdcdc" stroke-width="0.9"><path d="M1 0.6V7H7.4M1.6 6.4L6.6 1.4"/></svg>
<svg class="abs" style="left:835.8px;top:57px" width="8" height="8" viewBox="0 0 8 8" fill="none" stroke="#dcdcdc" stroke-width="0.9"><path d="M1 0.6V7H7.4M1.6 6.4L6.6 1.4"/></svg>
<svg class="abs" style="left:854.0px;top:57px" width="8" height="8" viewBox="0 0 8 8" fill="none" stroke="#dcdcdc" stroke-width="0.9"><path d="M1.6 1.8H6.4V7.4H1.6ZM0.8 1.6H7.2M3 0.6H5M3.2 3V6.2M4.8 3V6.2"/></svg>
<svg class="abs" style="left:783.3px;top:76.8px" width="5" height="4" viewBox="0 0 5 4"><path d="M0.1 3.7H4.9L2.5 0.8Z" fill="#4b76b0"/></svg>
<div class="t" style="left:793.60px;top:73.81px;font-size:7.20px;color:#1c1c1c;transform:scaleX(1.053);transform-origin:0 50%;">Medición actual</div>
<svg class="abs" style="left:781.5px;top:88px" width="9" height="8" viewBox="0 0 9 8"><ellipse cx="4.3" cy="3.9" rx="3.1" ry="2.6" fill="none" stroke="#d8434f" stroke-width="0.9"/></svg>
<div class="t" style="left:793.90px;top:86.81px;font-size:7.20px;color:#1c1c1c;transform:scaleX(0.912);transform-origin:0 50%;">HTL</div>
<svg class="abs" style="left:781.5px;top:101.5px" width="9" height="8" viewBox="0 0 9 8"><path d="M1.2 0.9L7.4 7.1M7.4 0.9L1.2 7.1" fill="none" stroke="#3b4ba3" stroke-width="0.8"/></svg>
<div class="t" style="left:793.90px;top:100.81px;font-size:7.20px;color:#1c1c1c;transform:scaleX(0.912);transform-origin:0 50%;">HTL</div>
<div class="t" style="left:781.60px;top:211.81px;font-size:7.20px;color:#1c1c1c;transform:scaleX(1.026);transform-origin:0 50%;">Asistente</div>
<svg class="abs" style="left:891.6px;top:213.8px" width="5" height="6" viewBox="0 0 5 6"><path d="M0.6 0.3V5.7L4.4 3Z" fill="#3c78c3"/></svg>
<svg class="abs" style="left:785px;top:231.2px" width="5" height="4" viewBox="0 0 5 4"><path d="M0.1 3.7H4.9L2.5 0.8Z" fill="#4b76b0"/></svg>
<div class="t" style="left:794.30px;top:227.81px;font-size:7.20px;color:#1c1c1c;transform:scaleX(1.043);transform-origin:0 50%;">Advertencias de integridad</div>
<svg class="abs" style="left:785px;top:246.2px" width="5" height="4" viewBox="0 0 5 4"><path d="M0.1 3.7H4.9L2.5 0.8Z" fill="#4b76b0"/></svg>
<div class="t" style="left:794.90px;top:242.81px;font-size:7.20px;color:#1c1c1c;transform:scaleX(0.831);transform-origin:0 50%;">HTL</div>
<div class="t" style="left:810.60px;top:242.81px;font-size:7.20px;color:#1c1c1c;font-weight:bold;transform:scaleX(0.930);transform-origin:0 50%;-webkit-text-stroke:0;">Izq</div>
<svg class="abs" style="left:0;top:0" width="900" height="468" viewBox="0 0 900 468"><circle cx="787.9" cy="261.5" r="3.2" fill="#e6f1fb" stroke="#8fc0ee" stroke-width="0.8"/><circle cx="787.9" cy="261.5" r="2.3" fill="#3d8fe0"/><path d="M787.9 260.2V261.9" stroke="#fff" stroke-width="0.7"/><circle cx="787.9" cy="262.8" r="0.35" fill="#fff"/></svg>
<div class="t" style="left:795.30px;top:256.81px;font-size:7.20px;color:#1c1c1c;transform:scaleX(0.982);transform-origin:0 50%;">Faltan 8 kHz</div>
<div class="abs" style="left:193.00px;top:387.10px;width:53.70px;height:13.10px;background:#cbcbcb;"></div>
<div class="t" style="left:206.00px;top:388.81px;font-size:7.20px;color:#ededed;transform:scaleX(1.018);transform-origin:0 50%;">Estímulo</div>
<div class="abs" style="left:193.00px;top:403.40px;width:53.70px;height:13.60px;background:#3f74b4;"></div>
<div class="t" style="left:202.00px;top:405.81px;font-size:7.20px;color:#fff;transform:scaleX(1.034);transform-origin:0 50%;">Almacenar</div>
<div class="abs" style="left:193.00px;top:420.00px;width:53.70px;height:13.70px;background:#3f74b4;"></div>
<div class="t" style="left:197.50px;top:421.81px;font-size:7.20px;color:#fff;">Sin respuesta</div>
<div class="abs" style="left:260.60px;top:383.30px;width:180.00px;height:13.60px;background:#fff;box-sizing:border-box;border:0.9px solid #7dabd8;"></div>
<div class="t" style="left:318.70px;top:385.81px;font-size:7.20px;color:#222;">Der TDH-39 [NC]</div>
<svg class="abs" style="left:433.0px;top:388.5px" width="5" height="4" viewBox="0 0 5 4"><path d="M0.1 0.3H4.9L2.5 3.4Z" fill="#4a7ab2"/></svg>
<div class="abs" style="left:260.60px;top:398.60px;width:85.40px;height:23.00px;background:#fff;"></div>
<div class="abs" style="left:354.90px;top:398.60px;width:85.50px;height:23.00px;background:#fff;"></div>
<div class="t" style="left:283.10px;top:405.62px;font-size:16.40px;color:#222;transform:scaleX(0.976);transform-origin:0 50%;">0</div>
<div class="t" style="left:297.70px;top:404.63px;font-size:10.60px;color:#222;transform:scaleX(0.981);transform-origin:0 50%;">dBHL</div>
<div class="t" style="left:370.00px;top:405.62px;font-size:16.40px;color:#222;transform:scaleX(1.058);transform-origin:0 50%;">1000</div>
<div class="t" style="left:414.40px;top:404.63px;font-size:10.60px;color:#222;transform:scaleX(0.965);transform-origin:0 50%;">Hz</div>
<svg class="abs" style="left:335.6px;top:400px" width="8" height="18" viewBox="0 0 8 18" fill="none" stroke="#4a86c8" stroke-width="1.35"><path d="M0.6 4.1H7.4M4 0.8V7.4M0.8 16.2H7.2"/></svg>
<svg class="abs" style="left:430.7px;top:400px" width="8" height="18" viewBox="0 0 8 18" fill="none" stroke="#4a86c8" stroke-width="1.35"><path d="M0.6 4.1H7.4M4 0.8V7.4M0.8 16.2H7.2"/></svg>
<div class="abs" style="left:260.60px;top:423.50px;width:85.20px;height:13.90px;background:#fff;box-sizing:border-box;border:0.9px solid #7dabd8;"></div>
<div class="t" style="left:264.10px;top:425.81px;font-size:7.20px;color:#222;transform:scaleX(1.043);transform-origin:0 50%;">Tono puro</div>
<svg class="abs" style="left:338.2px;top:428.8px" width="5" height="4" viewBox="0 0 5 4"><path d="M0.1 0.3H4.9L2.5 3.4Z" fill="#4a7ab2"/></svg>
<div class="abs" style="left:450.00px;top:383.30px;width:84.60px;height:13.40px;background:#fff;box-sizing:border-box;border:0.9px solid #7dabd8;"></div>
<div class="t" style="left:462.00px;top:385.81px;font-size:7.20px;color:#222;transform:scaleX(0.980);transform-origin:0 50%;">Izq TDH-39 [NC]</div>
<svg class="abs" style="left:527.0px;top:388.4px" width="5" height="4" viewBox="0 0 5 4"><path d="M0.1 0.3H4.9L2.5 3.4Z" fill="#4a7ab2"/></svg>
<div class="abs" style="left:450.00px;top:398.60px;width:84.60px;height:23.00px;background:#fbfbfb;"></div>
<svg class="abs" style="left:525.2px;top:400px" width="8" height="18" viewBox="0 0 8 18" fill="none" stroke="#cdcdcd" stroke-width="1.35"><path d="M0.6 4.1H7.4M4 0.8V7.4M0.8 16.2H7.2"/></svg>
<div class="abs" style="left:450.00px;top:423.50px;width:84.60px;height:14.00px;background:#fff;box-sizing:border-box;border:0.9px solid #7dabd8;"></div>
<div class="t" style="left:453.00px;top:425.81px;font-size:7.20px;color:#222;transform:scaleX(1.023);transform-origin:0 50%;">Ruido banda estrech</div>
<svg class="abs" style="left:527.0px;top:428.9px" width="5" height="4" viewBox="0 0 5 4"><path d="M0.1 0.3H4.9L2.5 3.4Z" fill="#4a7ab2"/></svg>
<div class="abs" style="left:549.20px;top:385.80px;width:19.50px;height:19.90px;background:#e0514f;box-sizing:border-box;border:1.1px solid #3f7cc0;box-shadow:inset 0 0 0 0.7px #e9eff7;"></div>
<div class="abs" style="left:573.80px;top:387.70px;width:16.20px;height:16.10px;background:#5c5c5c;border-radius:1px;"></div>
<div class="abs" style="left:596.80px;top:387.70px;width:16.10px;height:16.10px;background:#3458a6;border-radius:1px;"></div>
<svg class="abs" style="left:0;top:0" width="900" height="468" viewBox="0 0 900 468" fill="none" stroke-linecap="round"><path d="M562.9 394.6C563.1 388.3 554.1 388.3 554.2 394.6C554.3 397 556.9 397.3 557.5 399.2C557.9 400.4 558 401 558.4 401.7" stroke="#fde9e9" stroke-width="1.15"/><path d="M579.5 394.4C579.6 391.9 575.5 391.9 575.6 394.6C575.7 395.8 576.7 396.2 576.9 397.2C577 397.9 577.1 398.3 577.3 398.8" stroke="#f2f2f2" stroke-width="0.95"/><path d="M583.2 394.4C583.1 391.9 587.8 391.9 587.7 394.6C587.6 395.8 586.4 396.2 586.2 397.2C586.1 397.9 586 398.3 585.8 398.8" stroke="#f2f2f2" stroke-width="0.95"/><path d="M600.4 394.6C600.2 388.3 609.3 388.3 609.2 394.6C609.1 397 606.5 397.3 605.9 399.2C605.5 400.4 605.4 401 605 401.7" stroke="#cfe0fb" stroke-width="1.15"/></svg>
<div class="t" style="left:628.70px;top:385.81px;font-size:7.20px;color:#1c1c1c;transform:scaleX(1.027);transform-origin:0 50%;">Enmascaramiento</div>
<svg class="abs" style="left:628.5px;top:399.5px" width="7" height="7" viewBox="0 0 7 7"><circle cx="3.5" cy="3.5" r="2.8" fill="#f4f4f4" stroke="#e6e6e6" stroke-width="0.6"/></svg>
<div class="t" style="left:639.00px;top:398.81px;font-size:7.20px;color:#c6c6c6;transform:scaleX(1.023);transform-origin:0 50%;">Encendido</div>
<svg class="abs" style="left:681px;top:401.5px" width="3" height="3" viewBox="0 0 3 3"><circle cx="1.5" cy="1.5" r="0.9" fill="#555"/></svg>
<div class="t" style="left:689.00px;top:398.81px;font-size:7.20px;color:#c6c6c6;">Apagado</div>
<svg class="abs" style="left:628.5px;top:412.4px" width="7" height="7" viewBox="0 0 7 7"><circle cx="3.5" cy="3.5" r="2.8" fill="#f4f4f4" stroke="#e6e6e6" stroke-width="0.6"/></svg>
<div class="t" style="left:639.00px;top:411.81px;font-size:7.20px;color:#c6c6c6;transform:scaleX(1.032);transform-origin:0 50%;">Seguimiento</div>
<div class="abs" style="left:629.30px;top:424.00px;width:46.40px;height:13.20px;background:#fff;box-sizing:border-box;border:0.9px solid #7dabd8;"></div>
<div class="t" style="left:632.00px;top:425.81px;font-size:7.20px;color:#222;transform:scaleX(1.051);transform-origin:0 50%;">Opuesto</div>
<svg class="abs" style="left:668.1px;top:429.0px" width="5" height="4" viewBox="0 0 5 4"><path d="M0.1 0.3H4.9L2.5 3.4Z" fill="#4a7ab2"/></svg>
<svg class="abs" style="left:0;top:0" width="900" height="468" viewBox="0 0 900 468"><path d="M889 390H894.3L891.65 393.1Z" fill="#3a5ba4"/><rect x="891.2" y="402.3" width="3.7" height="3.4" fill="#fff" stroke="#355c9f" stroke-width="1.1"/><path d="M890 404.2V406.9H892.8" fill="none" stroke="#355c9f" stroke-width="0.9"/></svg>
<div class="abs" style="left:424.70px;top:450.00px;width:69.20px;height:13.80px;background:#3f74b4;"></div>
<div class="t" style="left:429.40px;top:451.81px;font-size:7.20px;color:#fff;transform:scaleX(1.045);transform-origin:0 50%;">Datos del historial</div>
<div class="abs" style="left:497.50px;top:450.00px;width:62.80px;height:13.80px;background:#cbcbcb;"></div>
<div class="t" style="left:502.50px;top:451.81px;font-size:7.20px;color:#ededed;transform:scaleX(1.047);transform-origin:0 50%;">Limpiar historial</div>
<div class="abs" style="left:564.20px;top:450.00px;width:61.10px;height:13.80px;background:#3f74b4;"></div>
<div class="t" style="left:568.90px;top:451.81px;font-size:7.20px;color:#fff;transform:scaleX(1.025);transform-origin:0 50%;">Copiar al nuevo</div>
<div class="abs" style="left:628.70px;top:450.00px;width:49.80px;height:13.80px;background:#3f74b4;"></div>
<div class="t" style="left:634.00px;top:451.81px;font-size:7.20px;color:#fff;">Crear nuevo</div>
<div class="abs" style="left:682.80px;top:450.00px;width:46.70px;height:13.80px;background:#3f74b4;"></div>
<div class="t" style="left:692.20px;top:451.81px;font-size:7.20px;color:#fff;transform:scaleX(1.077);transform-origin:0 50%;">Imprimir</div>
<div class="abs" style="left:733.30px;top:450.00px;width:46.60px;height:13.80px;background:#3f74b4;"></div>
<div class="t" style="left:746.00px;top:451.81px;font-size:7.20px;color:#fff;">Cerrar</div>
<div class="abs" style="left:784.00px;top:450.00px;width:115.20px;height:13.80px;background:#3f74b4;"></div>
<div class="t" style="left:788.30px;top:451.81px;font-size:7.20px;color:#fff;transform:scaleX(1.069);transform-origin:0 50%;">Mostrar/Ocultar vista de cliente</div>
<div class="abs" style="left:0.00px;top:34.40px;width:1.20px;height:433.60px;background:#5d6670;"></div>
<div class="abs" style="left:0.00px;top:466.20px;width:900.00px;height:1.30px;background:#1c5c9a;"></div>
<div class="abs" style="left:35.50px;top:466.20px;width:4.50px;height:1.30px;background:#f6d9b0;"></div>
</body>
</html>
